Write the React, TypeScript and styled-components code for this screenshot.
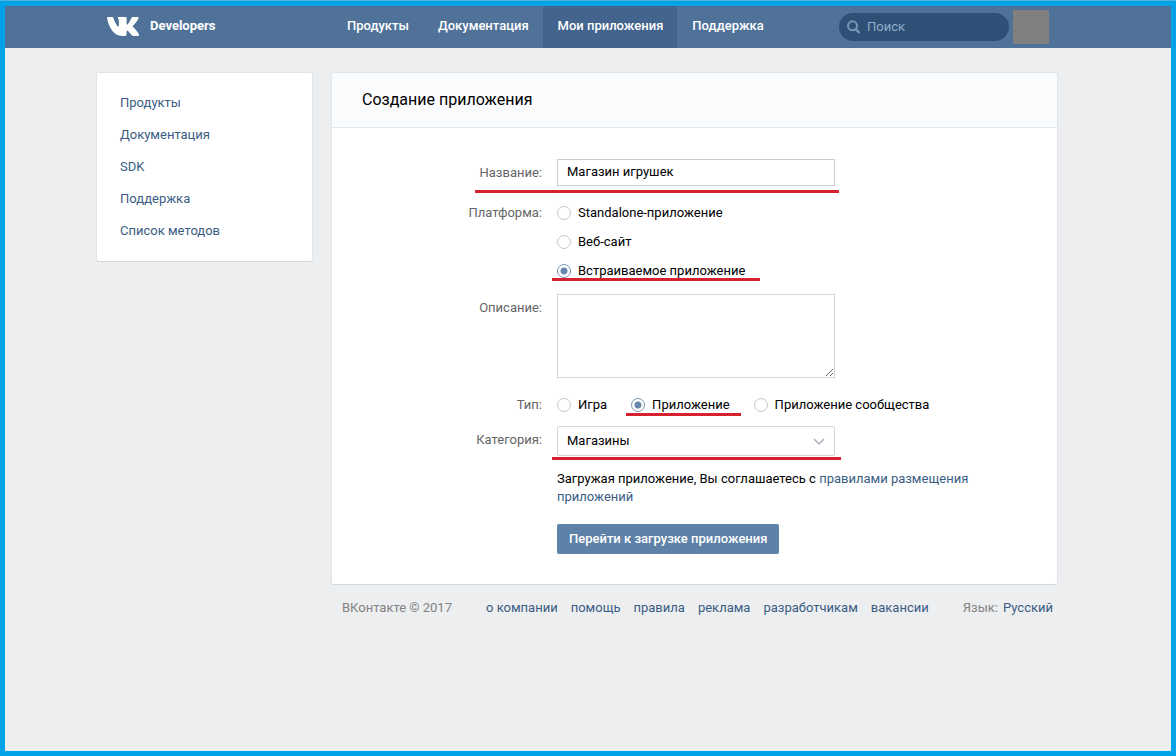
import React from "react";
import styled, { createGlobalStyle } from "styled-components";

const GlobalStyle = createGlobalStyle`
  *, *::before, *::after { box-sizing: border-box; }
  body {
    margin: 0;
    background: #edeef0;
    color: #000;
    font-family: Roboto, "Open Sans", sans-serif;
    font-size: 13px;
    line-height: 18px;
  }
  input, textarea, select, button { font: inherit; color: inherit; }
  ul { margin: 0; padding: 0; list-style: none; }
`;

const Frame = styled.div`
  display: flex;
  flex-direction: column;
  min-height: 100vh;
  border: 5px solid #00a2e8;
  border-top-width: 6px;
`;

const TopLine = styled.div`
  position: absolute;
  top: 0;
  left: 0;
  right: 0;
  height: 1px;
  background: #4fb4dc;
`;

const Header = styled.header`
  background: #507299;
  padding-right: 22px;
`;

const HeaderInner = styled.div`
  display: flex;
  align-items: center;
  max-width: 962px;
  height: 42px;
  margin: 0 auto;
  padding: 0 9px 0 11px;
`;

const Brand = styled.a`
  display: flex;
  align-items: center;
  gap: 11px;
  flex: 0 0 225px;
  height: 40px;
  align-self: flex-start;
  color: #fff;
  font-weight: 700;
  text-decoration: none;
`;

const Nav = styled.nav`
  display: flex;
  flex: 1;
  align-self: stretch;
`;

const NavLink = styled.a<{ $active?: boolean }>`
  padding: 11px 14px 11px 15px;
  background: ${(p) => (p.$active ? "#43648c" : "transparent")};
  color: #fff;
  font-weight: 500;
  text-decoration: none;
`;

const Search = styled.label`
  display: flex;
  align-items: center;
  gap: 7px;
  width: 170px;
  height: 28px;
  padding: 0 8px;
  border-radius: 14px;
  background: #304f76;
  color: #7996b8;
`;

const SearchInput = styled.input`
  flex: 1;
  min-width: 0;
  padding: 0;
  border: 0;
  outline: 0;
  background: transparent;
  color: #fff;
  &::placeholder { color: #8fadc8; opacity: 1; }
`;

const Avatar = styled.div`
  width: 36px;
  height: 34px;
  margin-left: 4px;
  background: #808080;
`;

const Page = styled.div`
  padding: 24px 22px 0 0;
`;

const Columns = styled.div`
  display: flex;
  align-items: flex-start;
  gap: 18px;
  max-width: 962px;
  margin: 0 auto;
`;

const Card = styled.div`
  background: #fff;
  border: 1px solid #e1e4e8;
  border-bottom-color: #d3d7dc;
  border-radius: 3px;
`;

const Sidebar = styled(Card)`
  flex: 0 0 217px;
  padding: 14px 23px;
`;

const Link = styled.a`
  color: #3a5c83;
  text-decoration: none;
`;

const SideLink = styled(Link)`
  display: block;
  padding: 7px 0;
`;

const Content = styled.main`
  flex: 1;
  min-width: 0;
`;

const Title = styled.h1`
  margin: 0;
  padding: 17px 30px;
  border-bottom: 1px solid #e4e8ed;
  border-radius: 3px 3px 0 0;
  background: #fafbfc;
  font-size: 16px;
  font-weight: 400;
  line-height: 20px;
`;

const Form = styled.form`
  padding: 31px 60px 30px 0;
`;

const Row = styled.div<{ $gap: number }>`
  display: grid;
  grid-template-columns: 210px 1fr;
  column-gap: 15px;
  margin-bottom: ${(p) => p.$gap}px;
`;

const labelStyle = `
  padding-top: 5px;
  color: #656565;
  text-align: right;
`;

const FieldLabel = styled.label`${labelStyle}`;
const GroupLabel = styled.span`
  ${labelStyle}
  padding-top: 0;
`;

const Marked = styled.div<{ $left: number; $right: number; $drop: number }>`
  position: relative;
  width: fit-content;
  &::after {
    content: "";
    position: absolute;
    left: -${(p) => p.$left}px;
    right: -${(p) => p.$right}px;
    bottom: -${(p) => p.$drop}px;
    height: 3px;
    background: #d6222f;
    pointer-events: none;
  }
`;

const TextInput = styled.input`
  display: block;
  width: 278px;
  height: 27px;
  padding: 0 9px 2px;
  border: 1px solid #c9ced3;
  outline: 0;
  background: #fff;
`;

const TextArea = styled.textarea`
  display: block;
  width: 278px;
  height: 84px;
  padding: 5px 9px;
  border: 1px solid #d3d6d9;
  outline: 0;
  resize: both;
`;

const SelectBox = styled.div`
  position: relative;
  width: 278px;
  svg {
    position: absolute;
    top: 12px;
    right: 10px;
    pointer-events: none;
  }
`;

const Select = styled.select`
  display: block;
  width: 100%;
  height: 30px;
  padding: 0 9px;
  border: 1px solid #d3d6d9;
  border-radius: 2px;
  outline: 0;
  background: #fff;
  appearance: none;
`;

const RadioColumn = styled.div`
  display: grid;
  gap: 11px;
`;

const RadioLine = styled.div`
  display: flex;
  gap: 24px;
`;

const RadioLabel = styled.label`
  display: flex;
  align-items: center;
  gap: 7px;
  width: fit-content;
`;

const RadioInput = styled.input`
  flex: none;
  width: 14px;
  height: 14px;
  margin: 0;
  border: 1px solid #c1c9d1;
  border-radius: 50%;
  background: #fff;
  appearance: none;
  &:checked {
    border-color: #7b95b3;
    background: radial-gradient(circle, #6686ab 3px, #fff 4px);
  }
`;

const Terms = styled.p`
  grid-column: 2;
  margin: 0;
`;

const Submit = styled.button`
  grid-column: 2;
  justify-self: start;
  height: 30px;
  padding: 0 12px;
  border: 0;
  border-radius: 2px;
  background: #5e81a8;
  color: #fff;
  font-weight: 500;
`;

const Footer = styled.footer`
  display: flex;
  justify-content: space-between;
  padding: 14px 5px 14px 11px;
  color: #828282;
`;

const FooterLinks = styled.nav`
  display: flex;
  gap: 13px;
`;

const Language = styled.div`
  display: flex;
  gap: 5px;
`;

const VkLogo = () => (
  <svg width="32" height="19" viewBox="0 0 32 19" fill="#fff" aria-hidden="true">
    <path d="M0 .8Q0 0 .9 0h4.300q.9 0 1.200.9C7.600 4.400 8.900 7 10.400 9c.8 1 1.500.7 1.500-.6V4.200c0-1.400-.3-2-1-2.900-.5-.7-.2-1.300.7-1.300h7q1 0 1 1.200v5.600c0 1 .7 1 1.400.2 1.500-1.900 2.500-3.900 3.400-6q.4-1 1.400-1h5q1.200 0 .7 1.200c-1 2.400-3 4.900-5.200 7.200-.7.8-.7 1.200 0 1.900 2.200 2.100 4.200 4.400 5.500 6.700q.9 1.900-.9 1.900H26.200q-1 0-1.700-.8l-3.500-4c-.8-.9-1.400-.6-1.400.7v2.500q0 1.700-1.500 1.700h-3C7.400 19 2.100 11.700 0 .8Z" />
  </svg>
);

const SearchIcon = () => (
  <svg width="13" height="14" viewBox="0 0 13 14" fill="none" stroke="currentColor" aria-hidden="true">
    <circle cx="5.500" cy="5.800" r="4.500" strokeWidth="2" />
    <path d="m8.900 9.300 3 3" strokeWidth="2.400" strokeLinecap="round" />
  </svg>
);

const Chevron = () => (
  <svg width="12" height="8" viewBox="0 0 12 8" fill="none" stroke="#a9b1b9" strokeWidth="1.500" aria-hidden="true">
    <path d="m1 1 5 5 5-5" />
  </svg>
);

const Radio = ({ name, text, checked }: { name: string; text: string; checked?: boolean }) => (
  <RadioLabel>
    <RadioInput type="radio" name={name} defaultChecked={checked} />
    {text}
  </RadioLabel>
);

const sections = ["Продукты", "Документация", "Мои приложения", "Поддержка"];
const sideLinks = ["Продукты", "Документация", "SDK", "Поддержка", "Список методов"];
const footerLinks = ["о компании", "помощь", "правила", "реклама", "разработчикам", "вакансии"];

export default function App() {
  return (
    <Frame>
      <GlobalStyle />
      <TopLine />
      <Header>
        <HeaderInner>
          <Brand href="#">
            <VkLogo />
            Developers
          </Brand>
          <Nav>
            {sections.map((s) => (
              <NavLink key={s} href="#" $active={s === "Мои приложения"}>{s}</NavLink>
            ))}
          </Nav>
          <Search>
            <SearchIcon />
            <SearchInput type="text" placeholder="Поиск" aria-label="Поиск" />
          </Search>
          <Avatar />
        </HeaderInner>
      </Header>
      <Page>
        <Columns>
          <Sidebar as="aside">
            <ul>
              {sideLinks.map((s) => (
                <li key={s}><SideLink href="#">{s}</SideLink></li>
              ))}
            </ul>
          </Sidebar>
          <Content>
            <Card>
              <Title>Создание приложения</Title>
              <Form onSubmit={(e) => e.preventDefault()}>
                <Row $gap={18}>
                  <FieldLabel htmlFor="name">Название:</FieldLabel>
                  <Marked $left={82} $right={4} $drop={7}>
                    <TextInput id="name" type="text" defaultValue="Магазин игрушек" />
                  </Marked>
                </Row>
                <Row $gap={14} role="radiogroup" aria-labelledby="platform">
                  <GroupLabel id="platform">Платформа:</GroupLabel>
                  <RadioColumn>
                    <Radio name="platform" text="Standalone-приложение" />
                    <Radio name="platform" text="Веб-сайт" />
                    <Marked $left={5} $right={15} $drop={1}>
                      <Radio name="platform" text="Встраиваемое приложение" checked />
                    </Marked>
                  </RadioColumn>
                </Row>
                <Row $gap={18}>
                  <FieldLabel htmlFor="description">Описание:</FieldLabel>
                  <TextArea id="description" />
                </Row>
                <Row $gap={12} role="radiogroup" aria-labelledby="kind">
                  <GroupLabel id="kind">Тип:</GroupLabel>
                  <RadioLine>
                    <Radio name="kind" text="Игра" />
                    <Marked $left={5} $right={11} $drop={2}>
                      <Radio name="kind" text="Приложение" checked />
                    </Marked>
                    <Radio name="kind" text="Приложение сообщества" />
                  </RadioLine>
                </Row>
                <Row $gap={14}>
                  <FieldLabel htmlFor="category">Категория:</FieldLabel>
                  <Marked $left={5} $right={6} $drop={4}>
                    <SelectBox>
                      <Select id="category">
                        <option>Магазины</option>
                      </Select>
                      <Chevron />
                    </SelectBox>
                  </Marked>
                </Row>
                <Row $gap={18}>
                  <Terms>
                    Загружая приложение, Вы соглашаетесь с <Link href="#">правилами размещения приложений</Link>
                  </Terms>
                </Row>
                <Row $gap={0}>
                  <Submit type="submit">Перейти к загрузке приложения</Submit>
                </Row>
              </Form>
            </Card>
            <Footer>
              <span>ВКонтакте © 2017</span>
              <FooterLinks>
                {footerLinks.map((s) => (
                  <Link key={s} href="#">{s}</Link>
                ))}
              </FooterLinks>
              <Language>
                Язык: <Link href="#">Русский</Link>
              </Language>
            </Footer>
          </Content>
        </Columns>
      </Page>
    </Frame>
  );
}
